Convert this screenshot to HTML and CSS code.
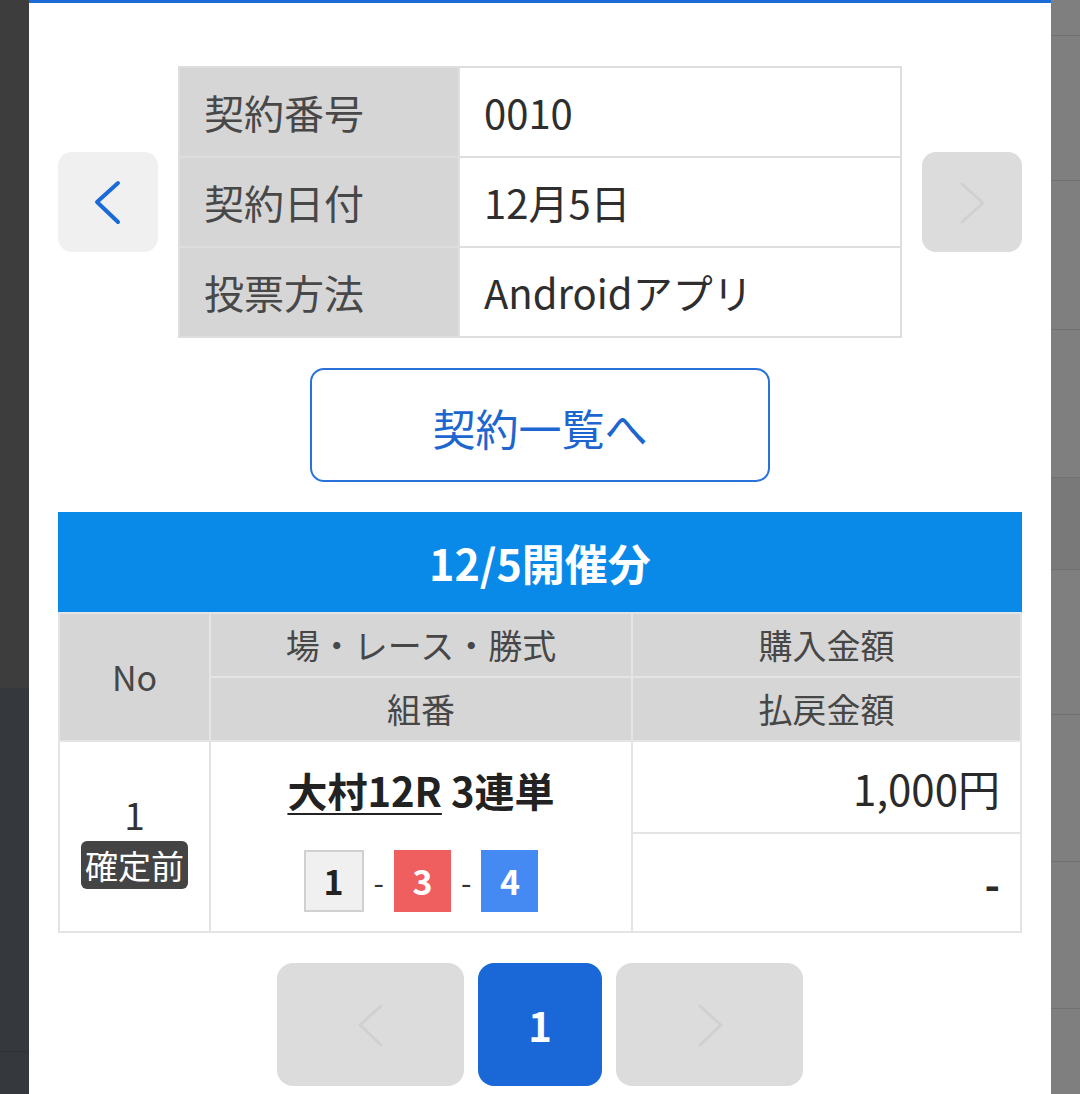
FILE: index.html
```html
<!DOCTYPE html>
<html lang="ja">
<head>
  <meta charset="UTF-8">
  <title>契約詳細</title>

  <link rel="stylesheet" href="styles.css">
</head>
<body>
  <div id="backdrop-left">
    <div class="shade-top"></div>
    <div class="shade-bottom"></div>
  </div>

  <div id="container-modal">
    <div id="container-contract">
      <a class="nav-btn nav-prev">
        <svg width="100" height="100" viewBox="0 0 100 100">
          <polyline points="60,31 39,50 60,70" fill="none" stroke="#1a6ad8" stroke-width="4" stroke-linecap="round" stroke-linejoin="round"/>
        </svg>
      </a>
      <table id="contract-table">
        <tr>
          <th>契約番号</th>
          <td>0010</td>
        </tr>
        <tr>
          <th>契約日付</th>
          <td>12月5日</td>
        </tr>
        <tr>
          <th>投票方法</th>
          <td>Androidアプリ</td>
        </tr>
      </table>
      <a class="nav-btn nav-next">
        <svg width="100" height="100" viewBox="0 0 100 100">
          <polyline points="40,32 61,51 40,70" fill="none" stroke="#d0d0d0" stroke-width="3" stroke-linecap="round" stroke-linejoin="round"/>
        </svg>
      </a>
    </div>

    <a class="list-btn">契約一覧へ</a>

    <div class="day-title">12/5開催分</div>

    <table id="bet-table">
      <colgroup>
        <col class="col-no">
        <col class="col-race">
        <col class="col-money">
      </colgroup>
      <tr class="head-row">
        <th rowspan="2">No</th>
        <th>場・レース・勝式</th>
        <th>購入金額</th>
      </tr>
      <tr class="head-row">
        <th>組番</th>
        <th>払戻金額</th>
      </tr>
      <tr class="bet-row-top">
        <td rowspan="2" class="cell-no">
          <div class="bet-no">1</div>
          <span class="badge">確定前</span>
        </td>
        <td rowspan="2" class="cell-race">
          <div class="race-name"><a class="race-link">大村12R</a> 3連単</div>
          <div class="boats">
            <span class="boat boat-1">1</span>
            <span class="dash">-</span>
            <span class="boat boat-3">3</span>
            <span class="dash">-</span>
            <span class="boat boat-4">4</span>
          </div>
        </td>
        <td class="cell-money">1,000円</td>
      </tr>
      <tr class="bet-row-bottom">
        <td class="cell-money cell-payout">-</td>
      </tr>
    </table>

    <div id="container-pager">
      <a class="page-btn page-arrow">
        <svg width="40" height="60" viewBox="0 0 40 60">
          <polyline points="30,11 9,30 30,50" fill="none" stroke="#d0d0d0" stroke-width="3" stroke-linecap="round" stroke-linejoin="round"/>
        </svg>
      </a>
      <a class="page-btn page-current">1</a>
      <a class="page-btn page-arrow">
        <svg width="40" height="60" viewBox="0 0 40 60">
          <polyline points="10,11 31,30 10,50" fill="none" stroke="#d0d0d0" stroke-width="3" stroke-linecap="round" stroke-linejoin="round"/>
        </svg>
      </a>
    </div>
  </div>

  <div id="backdrop-right">
    <div class="stripe" style="height: 36px"></div>
    <div class="stripe" style="height: 145px"></div>
    <div class="stripe" style="height: 149px"></div>
    <div class="stripe" style="height: 148px"></div>
    <div class="stripe stripe-dark" style="height: 92px"></div>
    <div class="stripe" style="height: 145px"></div>
    <div class="stripe" style="height: 147px"></div>
    <div class="stripe" style="height: 147px"></div>
    <div class="stripe stripe-last"></div>
  </div>
</body>
</html>
```

FILE: styles.css
```css
html, body {
  height: 1094px;
  margin: 0;
  overflow: hidden;
}

body {
  display: flex;
  font-family: "Noto Sans CJK JP", "Noto Sans", sans-serif;
  color: #333;
}

a {
  cursor: pointer;
  text-decoration: none;
}

/* backdrop behind the modal */
#backdrop-left {
  display: flex;
  flex-direction: column;
  width: 29px;
}

.shade-top {
  background-color: #3d3d3d;
  height: 688px;
}

.shade-bottom {
  background-color: #35383c;
  border-bottom: 1px solid #2f3235;
  height: 363px;
}

#backdrop-left::after {
  content: "";
  background-color: #35383c;
  flex: 1;
}

#backdrop-right {
  background-color: #7f7f7f;
  display: flex;
  flex-direction: column;
  width: 29px;
}

.stripe {
  border-bottom: 1px solid #717171;
  box-sizing: border-box;
}

.stripe-dark {
  background-color: #797979;
}

.stripe-last {
  border-bottom: none;
  flex: 1;
}

/* modal */
#container-modal {
  background-color: #fff;
  border-top: 3px solid #1a6ad8;
  box-sizing: border-box;
  padding: 63px 29px 0;
  width: 1022px;
}

#container-contract {
  align-items: center;
  display: flex;
  gap: 20px;
}

.nav-btn {
  border-radius: 14px;
  display: block;
  flex-shrink: 0;
  height: 100px;
  width: 100px;
}

.nav-btn svg {
  display: block;
}

.nav-prev {
  background-color: #f0f0f0;
}

.nav-next {
  background-color: #dcdcdc;
}

#contract-table {
  border-collapse: collapse;
  flex: 1;
}

#contract-table th,
#contract-table td {
  border: 2px solid #dedede;
  font-size: 40px;
  font-weight: normal;
  height: 88px;
  line-height: 1;
  padding: 0 24px;
  text-align: left;
}

#contract-table th {
  background-color: #d6d6d6;
  color: #484848;
  width: 230px;
}

#contract-table td {
  color: #2e2e2e;
}

.list-btn {
  border: 2px solid #2a72d9;
  border-radius: 14px;
  box-sizing: border-box;
  color: #1e66cf;
  display: flex;
  align-items: center;
  justify-content: center;
  font-size: 43px;
  height: 114px;
  margin: 30px auto 0;
  padding-top: 4px;
  width: 460px;
}

.day-title {
  align-items: center;
  background-color: #0a8ae8;
  color: #fff;
  display: flex;
  font-size: 43px;
  font-weight: bold;
  height: 100px;
  justify-content: center;
  margin-top: 30px;
}

/* bet list */
#bet-table {
  border-collapse: collapse;
  table-layout: fixed;
  width: 100%;
}

.col-no {
  width: 151px;
}

.col-race {
  width: 422px;
}

#bet-table th,
#bet-table td {
  border: 2px solid #e4e4e4;
  padding: 0;
}

#bet-table th {
  background-color: #d6d6d6;
  color: #474747;
  font-size: 34px;
  font-weight: normal;
  height: 62px;
  line-height: 1;
}

.bet-row-top td {
  height: 90px;
}

.bet-row-bottom td {
  height: 97px;
}

.cell-no {
  text-align: center;
}

.bet-no {
  color: #333;
  font-size: 37px;
  line-height: 1;
  margin: 12px 0 8px;
}

.badge {
  background-color: #444;
  border-radius: 6px;
  color: #fff;
  display: inline-block;
  font-size: 33px;
  line-height: 48px;
  padding: 0 4px;
}

.cell-race {
  text-align: center;
}

.race-name {
  color: #222;
  font-size: 40px;
  font-weight: bold;
  line-height: 1;
  margin-top: 8px;
}

.race-link {
  color: #222;
  text-decoration: underline;
  text-underline-offset: 6px;
  text-decoration-thickness: 2px;
}

.boats {
  align-items: center;
  display: flex;
  gap: 10px;
  justify-content: center;
  margin-top: 40px;
}

.boat {
  align-items: center;
  box-sizing: border-box;
  display: flex;
  font-size: 34px;
  font-weight: bold;
  height: 62px;
  justify-content: center;
  width: 57px;
}

.boat-1 {
  background-color: #f0f0f0;
  border: 2px solid #d0d0d0;
  color: #222;
  width: 60px;
}

.boat-3 {
  background-color: #ef5f5f;
  color: #fff;
}

.boat-4 {
  background-color: #448af2;
  color: #fff;
}

.dash {
  color: #333;
  font-size: 30px;
}

.cell-money {
  color: #2a2a2a;
  font-size: 42px;
  padding-right: 20px !important;
  text-align: right;
}

.cell-payout {
  font-weight: bold;
}

/* pager */
#container-pager {
  display: flex;
  gap: 14px;
  justify-content: center;
  margin-top: 30px;
}

.page-btn {
  align-items: center;
  border-radius: 16px;
  display: flex;
  height: 123px;
  justify-content: center;
}

.page-arrow {
  background-color: #dcdcdc;
  width: 187px;
}

.page-current {
  background-color: #1a68d8;
  color: #fff;
  font-size: 40px;
  font-weight: bold;
  width: 124px;
}
```
